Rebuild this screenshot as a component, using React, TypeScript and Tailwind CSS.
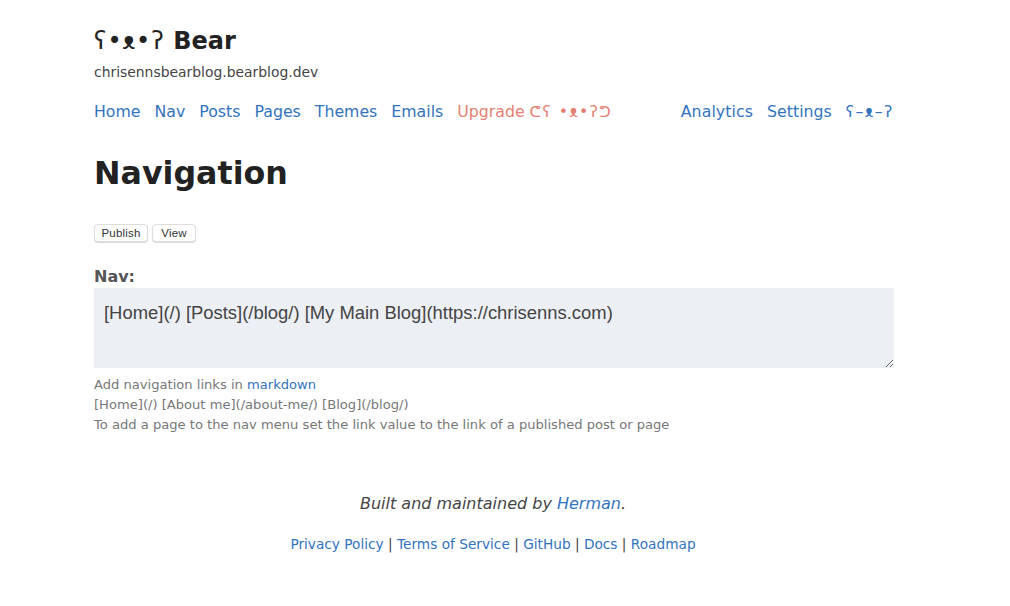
const sans = "font-['DejaVu_Sans','Noto_Sans',sans-serif]"

const navLeft = ["Home", "Nav", "Posts", "Pages", "Themes", "Emails"]
const footerLinks = ["Privacy Policy", "Terms of Service", "GitHub", "Docs", "Roadmap"]

export default function App() {
  return (
    <div className={`${sans} min-h-[606px] bg-white pl-[94px] text-[#444]`}>
      <div className="w-[800px]">
        <header className="pt-[25px]">
          <h1 className="text-[24px] leading-[32px] font-bold text-[#222]">
            <span className="font-normal tracking-[1.2px]">ʕ•ᴥ•ʔ</span> Bear
          </h1>
          <p className="mt-[5px] text-[13.9px] leading-[20px]">chrisennsbearblog.bearblog.dev</p>
        </header>

        <nav className="mt-[18px] flex items-center text-[15.75px] leading-[24px] text-[#3273bd]">
          <div className="flex gap-[14px]">
            {navLeft.map((item) => (
              <a key={item} href="#">{item}</a>
            ))}
            <a href="#" className="text-[#e57f73]">Upgrade <span className="tracking-[1.5px]">ᕦʕ •ᴥ•ʔᕤ</span></a>
          </div>
          <div className="ml-auto flex gap-[14px]">
            <a href="#" className="tracking-[0.1px]">Analytics</a>
            <a href="#">Settings</a>
            <a href="#" className="tracking-[1.7px]">ʕ–ᴥ–ʔ</a>
          </div>
        </nav>

        <h2 className="mt-[27px] text-[31.7px] leading-[44px] font-bold text-[#222]">Navigation</h2>

        <div className="mt-[29px] flex gap-[4px] font-['Liberation_Sans',sans-serif]">
          <button className="h-[18px] w-[54px] rounded-[4px] border border-[#ddd] bg-white text-[11.5px] tracking-[0.2px] text-[#333] shadow-[0_1px_1px_rgba(0,0,0,0.15)]">Publish</button>
          <button className="h-[18px] w-[44px] rounded-[4px] border border-[#ddd] bg-white text-[11.5px] tracking-[0.2px] text-[#333] shadow-[0_1px_1px_rgba(0,0,0,0.15)]">View</button>
        </div>

        <label className="mt-[24px] block text-[16px] leading-[22px] font-bold text-[#555]">Nav:</label>
        <textarea
          defaultValue="[Home](/) [Posts](/blog/) [My Main Blog](https://chrisenns.com)"
          className="block h-[80px] w-[800px] bg-[#eceff4] px-[10px] py-[13px] font-['Liberation_Sans',sans-serif] text-[18.43px] leading-[24px] text-[#444] outline-none"
        />

        <div className="mt-[7px] text-[13.1px] leading-[20px] text-[#777]">
          <p>Add navigation links in <a href="#" className="text-[#3273bd]">markdown</a></p>
          <p>[Home](/) [About me](/about-me/) [Blog](/blog/)</p>
          <p>To add a page to the nav menu set the link value to the link of a published post or page</p>
        </div>

        <footer className="mt-[57px] pr-[2px] text-center">
          <p className="text-[16px] leading-[24px] text-[#444] italic">
            Built and maintained by <a href="#" className="text-[#3273bd]">Herman</a>.
          </p>
          <p className="mt-[18px] text-[13.7px] leading-[20px] text-[#444]">
            {footerLinks.map((link, i) => (
              <span key={link}>
                {i > 0 && " | "}
                <a href="#" className="text-[#3273bd]">{link}</a>
              </span>
            ))}
          </p>
        </footer>
      </div>
    </div>
  )
}
